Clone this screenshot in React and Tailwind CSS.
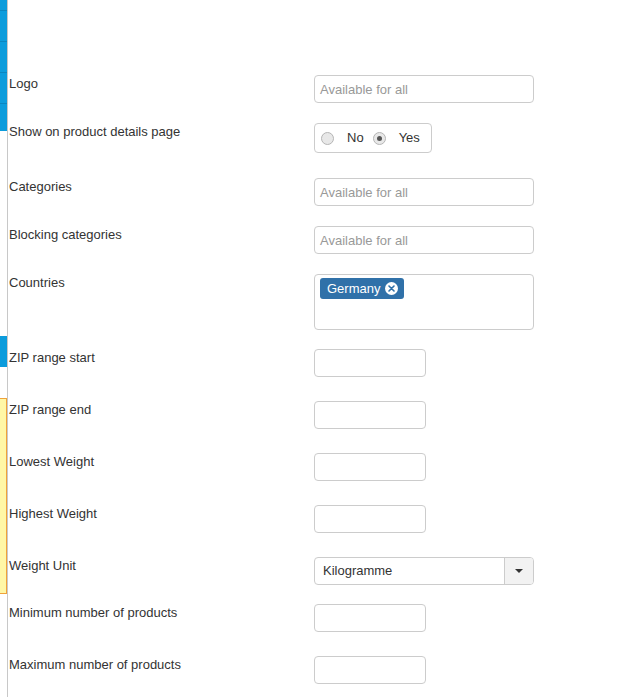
import React from "react";

function TextInput({ placeholder, w = "w-[220px]" }) {
  return (
    <div className={`${w} h-[28px] border border-[#cccccc] rounded-[4px] bg-white px-[5px] pt-[1px] flex items-center text-[13px] leading-[18px] text-[#999999]`}>
      {placeholder}
    </div>
  );
}

function Radio({ checked }) {
  return (
    <span className="w-[13px] h-[13px] rounded-full border border-[#b5b5b5] bg-[#e8e8e8] flex items-center justify-center shrink-0">
      {checked && <span className="w-[5px] h-[5px] rounded-full bg-[#555555]" />}
    </span>
  );
}

function Row({ label, h, children }) {
  return (
    <div className={`flex ${h}`}>
      <div className="w-[305px] shrink-0 text-[13px] leading-[18px] text-[#333333]">{label}</div>
      <div>{children}</div>
    </div>
  );
}

export default function App() {
  return (
    <div className="flex min-h-[697px] bg-white" style={{ fontFamily: '"Liberation Sans", Arial, sans-serif' }}>
      <div className="w-[8px] shrink-0 border-r border-[#c8c8c8] flex flex-col">
        <div className="w-[7px] h-[131px] bg-[#0c9cdc] flex flex-col">
          <div className="h-[10px]" />
          <div className="h-[1px] bg-[#0a86c0]" />
          <div className="h-[30px]" />
          <div className="h-[1px] bg-[#0a86c0]" />
          <div className="h-[30px]" />
          <div className="h-[1px] bg-[#0a86c0]" />
          <div className="h-[30px]" />
          <div className="h-[1px] bg-[#0a86c0]" />
        </div>
        <div className="h-[205px]" />
        <div className="w-[7px] h-[31px] bg-[#0c9cdc]" />
        <div className="h-[31px]" />
        <div className="w-[7px] h-[196px] bg-[#fff7a6] border-y border-r border-[#f0a23a]" />
      </div>
      <div className="flex-1 pl-[1px] pt-[75px] flex flex-col">
        <Row label="Logo" h="h-[48px]">
          <TextInput placeholder="Available for all" />
        </Row>
        <Row label="Show on product details page" h="h-[55px]">
          <div className="w-[118px] h-[30px] border border-[#cccccc] rounded-[4px] flex items-center pl-[6px] text-[13px] leading-[18px] text-[#333333]">
            <Radio />
            <span className="ml-[13px]">No</span>
            <span className="ml-[9px]"><Radio checked /></span>
            <span className="ml-[13px]">Yes</span>
          </div>
        </Row>
        <Row label="Categories" h="h-[48px]">
          <TextInput placeholder="Available for all" />
        </Row>
        <Row label="Blocking categories" h="h-[48px]">
          <TextInput placeholder="Available for all" />
        </Row>
        <Row label="Countries" h="h-[75px]">
          <div className="w-[220px] h-[56px] border border-[#cccccc] rounded-[4px] pl-[5px] pt-[3px] flex items-start">
            <span className="flex items-center h-[21px] bg-[#3071a9] rounded-[3px] pl-[7px] pr-[6px] text-[13px] leading-[18px] text-white">
              Germany
              <span className="ml-[5px] w-[13px] h-[13px] rounded-full bg-white flex items-center justify-center">
                <svg width="7" height="7" viewBox="0 0 7 7">
                  <path d="M1 1 L6 6 M6 1 L1 6" stroke="#3071a9" strokeWidth="1.6" strokeLinecap="round" />
                </svg>
              </span>
            </span>
          </div>
        </Row>
        <Row label="ZIP range start" h="h-[52px]">
          <TextInput w="w-[112px]" />
        </Row>
        <Row label="ZIP range end" h="h-[52px]">
          <TextInput w="w-[112px]" />
        </Row>
        <Row label="Lowest Weight" h="h-[52px]">
          <TextInput w="w-[112px]" />
        </Row>
        <Row label="Highest Weight" h="h-[52px]">
          <TextInput w="w-[112px]" />
        </Row>
        <Row label="Weight Unit" h="h-[47px]">
          <div className="w-[220px] h-[28px] border border-[#cccccc] rounded-[4px] flex overflow-hidden">
            <div className="flex-1 pl-[8px] flex items-center text-[13px] leading-[18px] text-[#333333]">Kilogramme</div>
            <div className="w-[29px] border-l border-[#cccccc] bg-[#f2f2f2] flex items-center justify-center">
              <svg width="8" height="4" viewBox="0 0 8 4">
                <path d="M0 0 H8 L4 4 Z" fill="#333333" />
              </svg>
            </div>
          </div>
        </Row>
        <Row label="Minimum number of products" h="h-[52px]">
          <TextInput w="w-[112px]" />
        </Row>
        <Row label="Maximum number of products" h="h-[41px]">
          <TextInput w="w-[112px]" />
        </Row>
      </div>
    </div>
  );
}
